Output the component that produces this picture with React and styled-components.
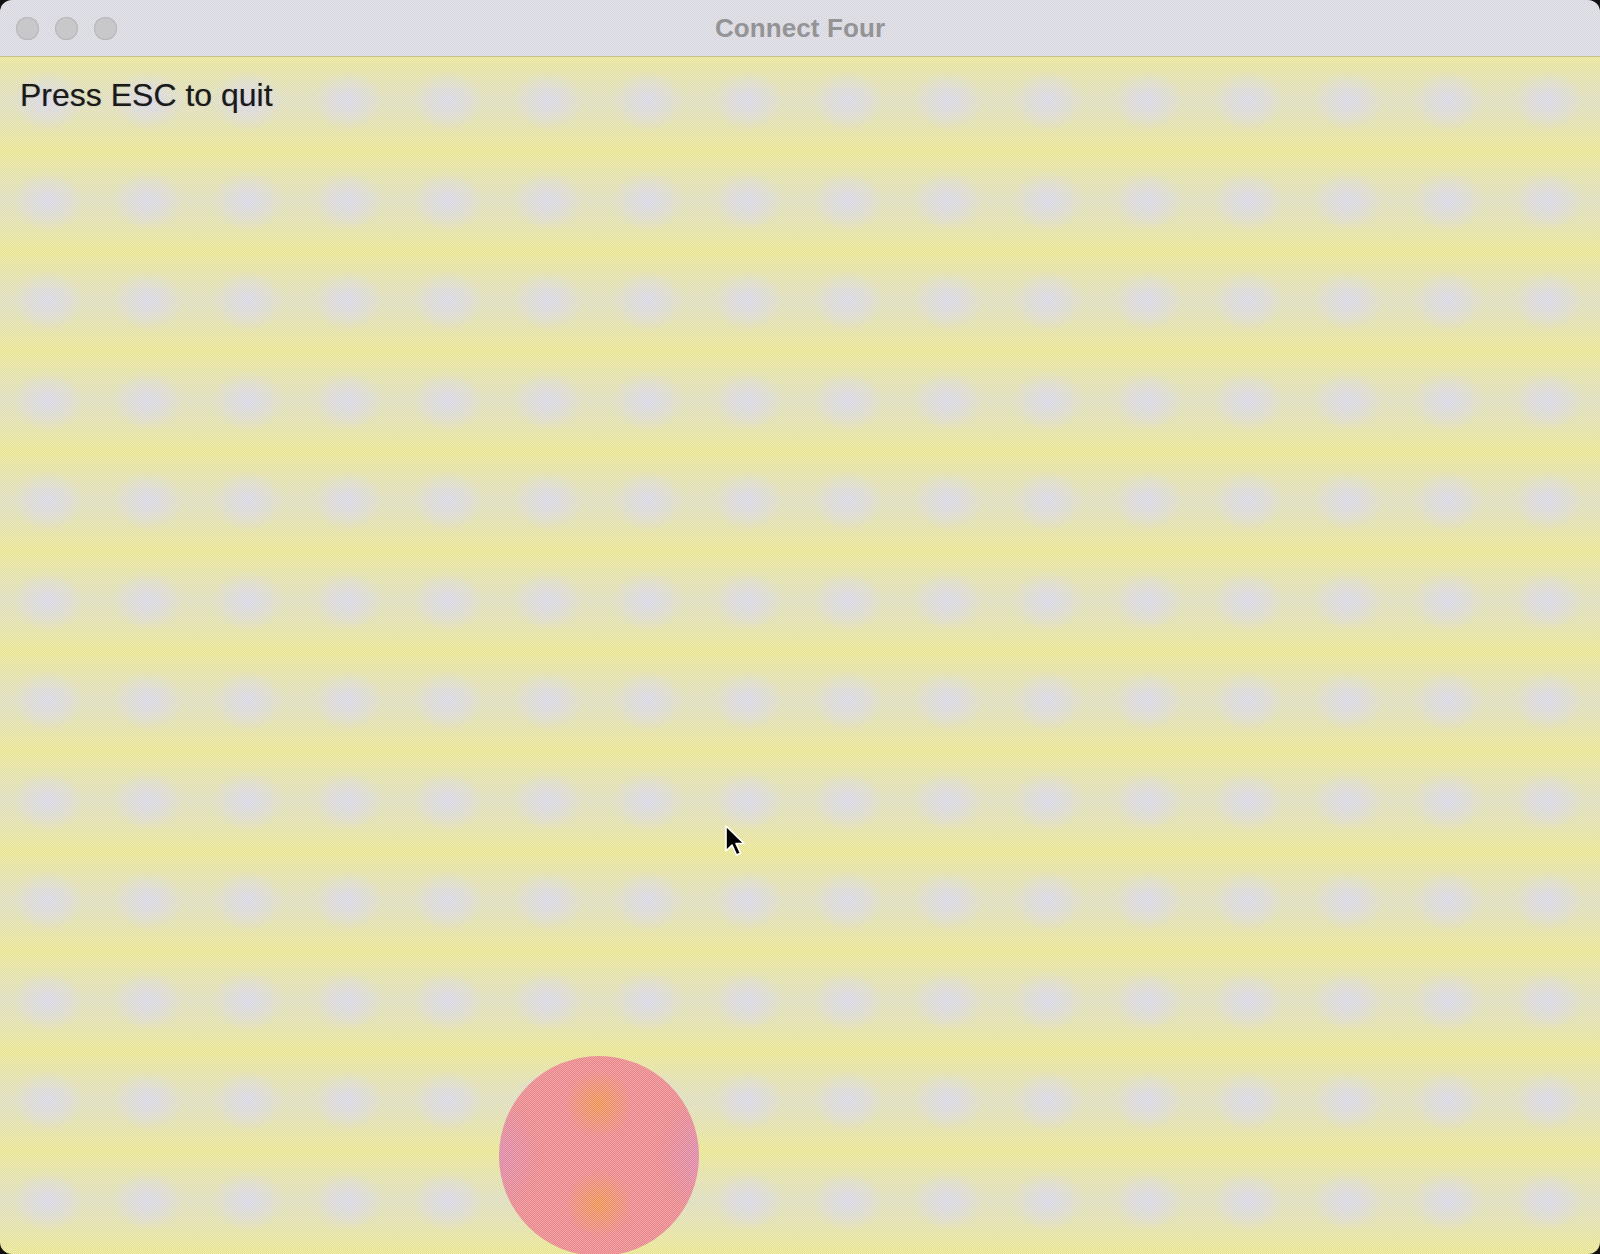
import React from "react";
import styled, { createGlobalStyle } from "styled-components";

const GlobalStyle = createGlobalStyle`
  html, body {
    margin: 0;
    padding: 0;
    background: #111;
    overflow: hidden;
  }
  #root {
    height: 100vh;
  }
`;

const dither = `repeating-conic-gradient(rgba(255,255,255,0.22) 0 25%, rgba(0,0,0,0.03) 0 50%)`;

const Window = styled.div`
  width: 1600px;
  height: 1254px;
  border-radius: 12px;
  overflow: hidden;
  display: flex;
  flex-direction: column;
  font-family: "Liberation Sans", Arial, sans-serif;
`;

const TitleBar = styled.div`
  height: 56px;
  flex-shrink: 0;
  display: grid;
  grid-template-columns: 1fr auto 1fr;
  align-items: center;
  padding: 0 16px;
  background: ${dither}, #dcdce4;
  background-size: 2px 2px, auto;
  border-bottom: 1px solid #c7c190;
`;

const Lights = styled.div`
  display: flex;
  gap: 16px;
`;

const Light = styled.span`
  width: 23px;
  height: 23px;
  border-radius: 50%;
  background: #c8c8ca;
  box-shadow: inset 0 0 0 1px #b8b8bc;
`;

const Title = styled.div`
  font-size: 26px;
  font-weight: bold;
  color: #949496;
  letter-spacing: 0.1px;
`;

const Board = styled.div`
  position: relative;
  flex: 1;
  background:
    ${dither},
    radial-gradient(ellipse 36px 30px at 50% 50%, rgba(220, 218, 234, 0.95), rgba(220, 218, 234, 0.55) 50%, rgba(220, 218, 234, 0) 100%),
    linear-gradient(to bottom, #ede994 0%, #e6e4b0 28%, #e2e1c0 50%, #e6e4b0 72%, #ede994 100%);
  background-size: 2px 2px, 100px 100px, 100px 100px;
  background-position: 0 0, -2px -6px, -2px -6px;
`;

const Hint = styled.div`
  padding: 20px 20px 0;
  font-size: 32px;
  line-height: 37px;
  color: #1a1a1a;
  text-shadow: 0 0 1px rgba(0, 0, 0, 0.35);
`;

const Disc = styled.div`
  position: absolute;
  left: ${(p) => p.$x}px;
  top: ${(p) => p.$y}px;
  width: 200px;
  height: 200px;
  border-radius: 50%;
  background:
    ${dither},
    radial-gradient(circle 34px at 50% 24%, rgba(242, 150, 80, 0.95), rgba(242, 150, 80, 0)),
    radial-gradient(circle 34px at 50% 74%, rgba(242, 150, 80, 0.95), rgba(242, 150, 80, 0)),
    radial-gradient(ellipse 40px 60px at 0% 50%, rgba(222, 138, 176, 0.85), rgba(222, 138, 176, 0)),
    radial-gradient(ellipse 40px 60px at 100% 50%, rgba(222, 138, 176, 0.85), rgba(222, 138, 176, 0)),
    #ee8a8e;
  background-size: 2px 2px, auto, auto, auto, auto, auto;
`;

const Cursor = styled.svg`
  position: absolute;
  left: ${(p) => p.$x}px;
  top: ${(p) => p.$y}px;
`;

function App() {
  return (
    <>
      <GlobalStyle />
      <Window>
        <TitleBar>
          <Lights>
            <Light />
            <Light />
            <Light />
          </Lights>
          <Title>Connect Four</Title>
          <div />
        </TitleBar>
        <Board>
          <Hint>Press ESC to quit</Hint>
          <Disc $x={499} $y={999} />
          <Cursor $x={724} $y={767} width="22" height="34" viewBox="0 0 22 34">
            <path
              d="M2 2 L2 27 L8 21 L12.5 31 L16.5 29.2 L12 19.5 L20 19.5 Z"
              fill="#000"
              stroke="#fff"
              strokeWidth="1.6"
              strokeLinejoin="round"
            />
          </Cursor>
        </Board>
      </Window>
    </>
  );
}

export default App;
